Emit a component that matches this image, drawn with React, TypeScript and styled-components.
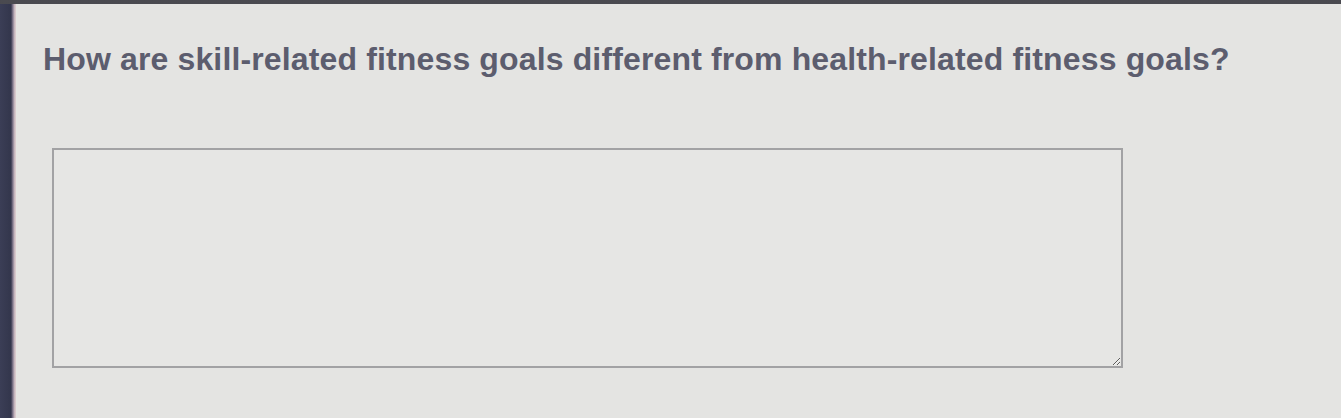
import React from 'react';
import styled, { createGlobalStyle } from 'styled-components';

const GlobalStyle = createGlobalStyle`
  html, body {
    margin: 0;
    padding: 0;
    background: #3b3c44;
  }
`;

// monitor edge around the page: thin dark strip on top, wider one on the left
const Bezel = styled.div`
  display: flex;
  width: 1341px;
  height: 418px;
  box-sizing: border-box;
  padding-top: 4px;
  background: linear-gradient(180deg, #4a4a50, #2f3036);
`;

const SideEdge = styled.div`
  width: 16px;
  flex-shrink: 0;
  background: linear-gradient(90deg, #3b3e56 0px, #33364c 11px, #8a7f93 13px, #d8c8cc 15px);
`;

const Panel = styled.div`
  flex: 1;
  background: #e4e4e2;
  padding: 37px 0 0 27px;
  box-sizing: border-box;
  font-family: "Liberation Sans", Arial, sans-serif;
`;

const Question = styled.p`
  margin: 0;
  font-size: 32px;
  font-weight: bold;
  letter-spacing: 0.14px;
  color: #5c5d6e;
  line-height: 36px;
  white-space: nowrap;
`;

const Answer = styled.textarea`
  display: block;
  margin: 71px 0 0 9px;
  width: 1071px;
  height: 220px;
  box-sizing: border-box;
  border: 2px solid #a2a2a4;
  background: #e6e6e4;
  resize: both;
  outline: none;
`;

export default function App() {
  return (
    <>
      <GlobalStyle />
      <Bezel>
        <SideEdge />
        <Panel>
          <Question>How are skill-related fitness goals different from health-related fitness goals?</Question>
          <Answer />
        </Panel>
      </Bezel>
    </>
  );
}
